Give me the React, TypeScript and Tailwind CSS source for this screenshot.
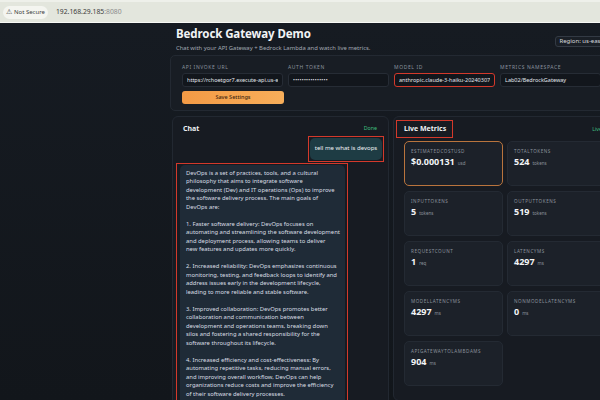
import React from "react";

const answer = [
  "DevOps is a set of practices, tools, and a cultural",
  "philosophy that aims to integrate software",
  "development (Dev) and IT operations (Ops) to improve",
  "the software delivery process. The main goals of",
  "DevOps are:",
  "",
  "1. Faster software delivery: DevOps focuses on",
  "automating and streamlining the software development",
  "and deployment process, allowing teams to deliver",
  "new features and updates more quickly.",
  "",
  "2. Increased reliability: DevOps emphasizes continuous",
  "monitoring, testing, and feedback loops to identify and",
  "address issues early in the development lifecycle,",
  "leading to more reliable and stable software.",
  "",
  "3. Improved collaboration: DevOps promotes better",
  "collaboration and communication between",
  "development and operations teams, breaking down",
  "silos and fostering a shared responsibility for the",
  "software throughout its lifecycle.",
  "",
  "4. Increased efficiency and cost-effectiveness: By",
  "automating repetitive tasks, reducing manual errors,",
  "and improving overall workflow, DevOps can help",
  "organizations reduce costs and improve the efficiency",
  "of their software delivery processes.",
];

const metrics: { label: string; value: string; unit: string; hl?: boolean }[] = [
  { label: "ESTIMATEDCOSTUSD", value: "$0.000131", unit: "usd", hl: true },
  { label: "TOTALTOKENS", value: "524", unit: "tokens" },
  { label: "INPUTTOKENS", value: "5", unit: "tokens" },
  { label: "OUTPUTTOKENS", value: "519", unit: "tokens" },
  { label: "REQUESTCOUNT", value: "1", unit: "req" },
  { label: "LATENCYMS", value: "4297", unit: "ms" },
  { label: "MODELLATENCYMS", value: "4297", unit: "ms" },
  { label: "NONMODELLATENCYMS", value: "0", unit: "ms" },
  { label: "APIGATEWAYTOLAMBDAMS", value: "904", unit: "ms" },
];

function Field({ label, value, red, dots }: { label: string; value: string; red?: boolean; dots?: boolean }) {
  return (
    <div className="flex flex-col gap-[3px] w-[101px]">
      <div className="text-[5px] tracking-[0.12em] text-[#8a929e] uppercase leading-[6px]">{label}</div>
      <div
        className={
          "h-[14px] rounded-[3px] bg-[#12161c] flex items-center px-[4px] overflow-hidden " +
          (red ? "border-[1.5px] border-[#d3392b]" : "border border-[#262c35]")
        }
      >
        <span className="block w-full overflow-hidden whitespace-nowrap text-[5.5px] text-[#e3e7ec]">
          {dots ? <span className="text-[5px] tracking-[0.3px]">••••••••••••••••</span> : value}
        </span>
      </div>
    </div>
  );
}

export default function App() {
  return (
    <div
      className="w-[600px] h-[400px] overflow-hidden flex flex-col bg-[#14181e]"
      style={{ fontFamily: '"Noto Sans", "Open Sans", sans-serif' }}
    >
      {/* browser bar */}
      <div className="h-[23px] shrink-0 bg-[#e3e6dd] border-t-[2px] border-[#eef0ea] border-b border-b-[#f7f8f4] flex items-center pl-[3px]">
        <div className="h-[13px] flex items-center gap-[2px] px-[3px] rounded-full bg-[#f4f5f0] text-[6px] text-[#3c3c3c]">
          <span className="text-[6.5px] leading-none">⚠</span>
          <span>Not Secure</span>
        </div>
        <div className="ml-[8px] text-[6.8px] text-[#3c3c3c]">
          192.168.29.185<span className="text-[#8b8b8b]">:8080</span>
        </div>
      </div>

      {/* page */}
      <div className="flex-1 bg-gradient-to-b from-[#161b22] to-[#12161b] overflow-hidden">
        <div className="ml-[170px] w-[480px] flex flex-col">
          {/* header */}
          <div className="flex justify-between items-start pl-[6px] pt-[4px]">
            <div className="flex flex-col">
              <div className="text-[11.5px] font-bold text-[#f1f3f5] leading-[14px] tracking-[-0.1px]">Bedrock Gateway Demo</div>
              <div className="text-[5.9px] text-[#a2a9b3] leading-[9px] mt-[3px]">
                Chat with your API Gateway + Bedrock Lambda and watch live metrics.
              </div>
            </div>
            <div className="mt-[9px] mr-[38px] h-[11px] px-[3px] rounded-[3px] border border-[#333a44] bg-[#1a1f26] flex items-center text-[6px] text-[#d5d9de] whitespace-nowrap">
              Region: us-east-1
            </div>
          </div>

          {/* settings */}
          <div className="mt-[2px] rounded-[5px] border border-[#232932] bg-[#181d24] pl-[11px] pt-[8px] pb-[6px] flex flex-col gap-[4px]">
            <div className="flex gap-[5px]">
              <Field label="API Invoke URL" value="https://rchoetgor7.execute-api.us-east-1.amazonaws.com" />
              <Field label="Auth Token" value="" dots />
              <Field label="Model ID" value="anthropic.claude-3-haiku-20240307-v1:0" red />
              <Field label="Metrics Namespace" value="Lab02/BedrockGateway" />
            </div>
            <div className="w-[102px] h-[13px] rounded-[3px] bg-gradient-to-r from-[#f39a45] to-[#f7ae5a] flex items-center justify-center text-[5.5px] font-medium text-[#3b230f]">
              Save Settings
            </div>
          </div>

          {/* panels */}
          <div className="mt-[5px] flex gap-[4px] items-start">
            {/* chat */}
            <div className="w-[217px] ml-[2px] h-[290px] rounded-[6px] border border-[#222831] bg-[#171b22] flex flex-col">
              <div className="flex justify-between items-center pl-[10px] pr-[11px] pt-[7px]">
                <div className="text-[7px] font-bold text-[#eef0f3]">Chat</div>
                <div className="text-[5.3px] text-[#3fbf7f]">Done</div>
              </div>
              <div className="flex justify-end pr-[4px] mt-[1px]">
                <div className="border-[1.5px] border-[#d3392b] p-[1px]">
                  <div className="h-[22px] w-[72px] justify-center rounded-[5px] bg-[#1e3c44] flex items-center text-[6px] text-[#eef2f4] whitespace-nowrap">
                    tell me what is devops
                  </div>
                </div>
              </div>
              <div className="ml-[3px] mt-[1px] w-[172px] border-[1.5px] border-[#d3392b] border-b-0 pl-[3px] pt-[1px]">
                <div className="w-[165px] rounded-t-[5px] bg-[#1f2b37] pl-[6px] pt-[4px] pb-[10px] text-[5.85px] leading-[8.5px] text-[#d9dee4] whitespace-nowrap">
                  {answer.map((l, i) => (
                    <div key={i} className="h-[8.5px]">{l}</div>
                  ))}
                </div>
              </div>
            </div>

            {/* metrics */}
            <div className="flex-1 h-[285px] rounded-[6px] border border-[#222831] bg-[#171b22] flex flex-col">
              <div className="flex justify-between items-center pl-[2px] pt-[3px]">
                <div className="border-[1.5px] border-[#d3392b] px-[7px] h-[18px] w-[57px] flex items-center text-[7px] font-bold text-[#eef0f3] whitespace-nowrap">
                  Live Metrics
                </div>
                <div className="text-[5.3px] text-[#3fbf7f] mr-[47px] mt-[2px]">Live</div>
              </div>
              <div className="grid grid-cols-[99px_99px] gap-x-[4px] gap-y-[5px] pl-[10px] mt-[3px]">
                {metrics.map((m) => (
                  <div
                    key={m.label}
                    className={
                      "h-[45px] rounded-[5px] bg-[#1c2129] pl-[6px] pt-[6px] flex flex-col " +
                      (m.hl ? "border border-[#b9743d]" : "border border-[#242a33]")
                    }
                  >
                    <div className="text-[4.6px] tracking-[0.12em] text-[#8b929c] leading-[6px]">{m.label}</div>
                    <div className="flex items-baseline gap-[3px] mt-[2px]">
                      <span className="text-[9px] font-bold text-[#f3f4f6] leading-[12px]">{m.value}</span>
                      <span className="text-[4.5px] text-[#8b929c]">{m.unit}</span>
                    </div>
                  </div>
                ))}
              </div>
            </div>
          </div>
        </div>
      </div>
    </div>
  );
}
